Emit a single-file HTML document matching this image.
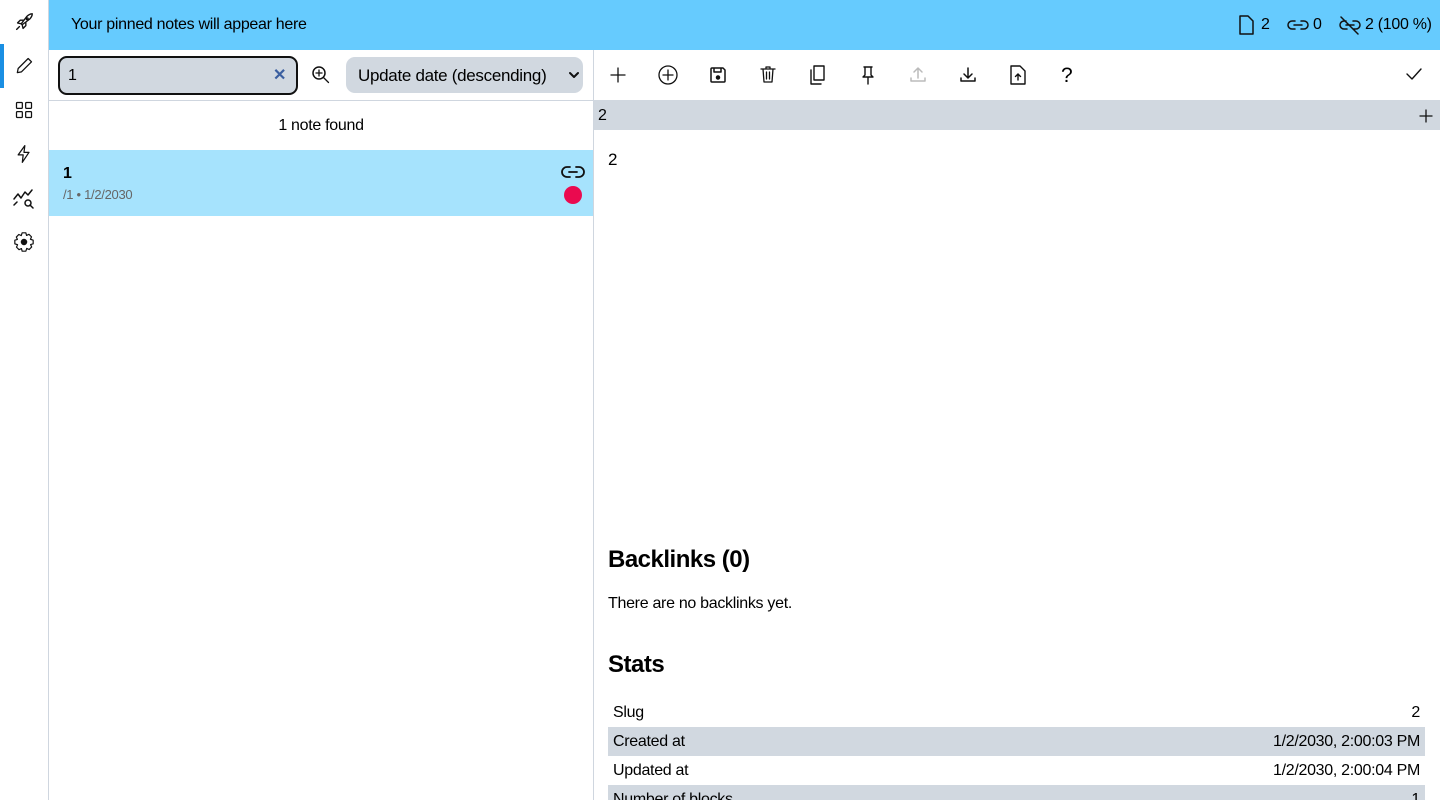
<!DOCTYPE html>
<html style="overflow:hidden;width:1440px;height:800px"><head><meta charset="utf-8"><style>
*{box-sizing:border-box;margin:0;padding:0}
body{width:1440px;height:800px;overflow:hidden;background:#fff;font-family:"Liberation Sans",sans-serif;color:#000;font-size:16px;position:relative;letter-spacing:-0.3px}
.abs{position:absolute}
svg{display:block}
.ic{fill:none;stroke:#111;stroke-width:1.5;stroke-linecap:round;stroke-linejoin:round}
</style></head><body>
<!-- sidebar -->
<div class="abs" style="left:0;top:0;width:49px;height:800px;border-right:1px solid #cfd6df"></div>
<div class="abs" style="left:0;top:44px;width:4px;height:44px;background:#1a8fe3"></div>
<svg class="abs ic" style="left:13px;top:11px" width="22" height="22" viewBox="0 0 24 24"><path d="M9 14l6-8c2-2 4-3 6-3 0 2-1 4-3 6l-8 6zM9 14l-4-1 3-3h4M10 15l1 4 3-3v-4M4 20l3-3"/><circle cx="15.5" cy="8.5" r="1"/></svg>
<svg class="abs ic" style="left:14px;top:56px" width="20" height="20" viewBox="0 0 24 24"><path d="M4 20l1-5L17 3l4 4L9 19z"/></svg>
<svg class="abs ic" style="left:14px;top:100px" width="20" height="20" viewBox="0 0 24 24"><rect x="3" y="3" width="7" height="7" rx="1"/><rect x="14" y="3" width="7" height="7" rx="1"/><rect x="3" y="14" width="7" height="7" rx="1"/><rect x="14" y="14" width="7" height="7" rx="1"/></svg>
<svg class="abs ic" style="left:14px;top:144px" width="20" height="20" viewBox="0 0 24 24"><path d="M13 2L5 13h6l-1 9 8-12h-6z"/></svg>
<svg class="abs ic" style="left:12px;top:187px" width="24" height="22" viewBox="0 0 24 22"><path d="M2 12l4-5 3 4 4-6 3 3 4-5"/><circle cx="16" cy="16" r="3"/><path d="M18 18l3 3M2 18l3-3"/></svg>
<svg class="abs ic" style="left:13px;top:231px" width="22" height="22" viewBox="0 0 24 24"><path d="M10 2h4l.8 2.8 2.6-1.2 2.8 2.8-1.2 2.6L22 10v4l-2.8.8 1.2 2.6-2.8 2.8-2.6-1.2L14 22h-4l-.8-2.8-2.6 1.2-2.8-2.8 1.2-2.6L2 14v-4l2.8-.8-1.2-2.6 2.8-2.8 2.6 1.2z" stroke-width="1.3"/><circle cx="12" cy="12" r="2.8" fill="#111"/></svg>
<!-- top bar -->
<div class="abs" style="left:49px;top:0;width:1391px;height:50px;background:#66cbfe"></div>
<div class="abs" style="left:71px;top:16px;font-size:16px">Your pinned notes will appear here</div>
<svg class="abs ic" style="left:1237px;top:15px" width="18" height="20" viewBox="0 0 18 20"><path d="M3 1h8l5 5v13H3z"/></svg>
<div class="abs" style="left:1261px;top:16px">2</div>
<svg class="abs ic" style="left:1287px;top:18px" width="22" height="14" viewBox="0 0 22 14"><path d="M8 3H5a4 4 0 000 8h3M14 3h3a4 4 0 010 8h-3M7 7h8"/></svg>
<div class="abs" style="left:1313px;top:16px">0</div>
<svg class="abs ic" style="left:1338px;top:15px" width="24" height="20" viewBox="0 0 24 20"><path d="M8 6H6a4 4 0 000 8h3M15 6h3a4 4 0 010 8h-3M8 10h8M3 2l17 17"/></svg>
<div class="abs" style="left:1365px;top:16px">2 (100 %)</div>
<!-- left panel -->
<div class="abs" style="left:593px;top:50px;width:1px;height:750px;background:#cfd6df"></div>
<div class="abs" style="left:58px;top:56px;width:240px;height:39px;background:#d1d8e0;border:2px solid #111;border-radius:9px;padding:9px 8px;font-size:16px">1</div>
<div class="abs" style="left:273px;top:65px;color:#3b5fa0;font-weight:bold;font-size:16px">✕</div>
<svg class="abs ic" style="left:311px;top:65px" width="20" height="20" viewBox="0 0 20 20"><circle cx="8" cy="8" r="6"/><path d="M12.5 12.5l5 5M8 5v6M5 8h6" stroke-width="1.3"/></svg>
<div class="abs" style="left:346px;top:57px;width:237px;height:36px;background:#d1d8e0;border-radius:9px;padding:9px 12px;font-size:17px">Update date (descending)</div>
<svg class="abs ic" style="left:569px;top:71px" width="10" height="8" viewBox="0 0 10 8"><path d="M1 2l4 4 4-4" stroke-width="2"/></svg>
<div class="abs" style="left:49px;top:100px;width:544px;height:1px;background:#cfd6df"></div>
<div class="abs" style="left:49px;top:117px;width:544px;text-align:center">1 note found</div>
<div class="abs" style="left:49px;top:150px;width:544px;height:66px;background:#a6e3fd"></div>
<div class="abs" style="left:63px;top:165px;font-weight:bold;font-size:16px">1</div>
<div class="abs" style="left:63px;top:187px;font-size:13px;color:#666">/1 • 1/2/2030</div>
<svg class="abs ic" style="left:561px;top:165px" width="24" height="14" viewBox="0 0 24 14"><path d="M9 2H6a5 5 0 000 10h3M15 2h3a5 5 0 010 10h-3M8 7h8" stroke-width="1.8"/></svg>
<div class="abs" style="left:564px;top:186px;width:18px;height:18px;border-radius:50%;background:#ea0a4f"></div>
<!-- toolbar -->
<svg class="abs ic" style="left:608px;top:65px" width="20" height="20" viewBox="0 0 20 20"><path d="M10 3v14M3 10h14" stroke-width="1.3"/></svg>
<svg class="abs ic" style="left:657px;top:64px" width="22" height="22" viewBox="0 0 22 22"><circle cx="11" cy="11" r="9" stroke-width="1.3"/><path d="M11 6v10M6 11h10" stroke-width="1.3"/></svg>
<svg class="abs ic" style="left:708px;top:65px" width="20" height="20" viewBox="0 0 20 20"><path d="M3 4a1 1 0 011-1h11l2 2v11a1 1 0 01-1 1H4a1 1 0 01-1-1zM6 3v4h7V3"/><circle cx="10" cy="12.5" r="1.5" fill="#111"/></svg>
<svg class="abs ic" style="left:758px;top:65px" width="20" height="20" viewBox="0 0 20 20"><path d="M3 4h14M5 4l1 13h8l1-13M8 3V2h4v1M8.5 7v7M11.5 7v7" stroke-width="1.3"/></svg>
<svg class="abs ic" style="left:808px;top:64px" width="20" height="22" viewBox="0 0 20 22"><path d="M6 2h10v14H6zM3 6v14h10" stroke-width="1.4"/></svg>
<svg class="abs ic" style="left:858px;top:64px" width="20" height="22" viewBox="0 0 20 22"><path d="M6 3h8M7 3v8l-2 2h10l-2-2V3M10 13v7" stroke-width="1.4"/></svg>
<svg class="abs ic" style="left:908px;top:65px;stroke:#bbb" width="20" height="20" viewBox="0 0 20 20"><path d="M10 3v10M6 7l4-4 4 4M3 13v3h14v-3"/></svg>
<svg class="abs ic" style="left:958px;top:65px" width="20" height="20" viewBox="0 0 20 20"><path d="M10 3v10M6 9l4 4 4-4M3 13v3h14v-3"/></svg>
<svg class="abs ic" style="left:1008px;top:64px" width="20" height="22" viewBox="0 0 20 22"><path d="M3 2h9l5 5v13H3zM10 16v-6M7.5 12.5L10 10l2.5 2.5" stroke-width="1.4"/></svg>
<div class="abs" style="left:1061px;top:64px;font-size:21px">?</div>
<svg class="abs ic" style="left:1405px;top:66px" width="18" height="16" viewBox="0 0 18 16"><path d="M2 8l5 5L16 3" stroke-width="1.4"/></svg>
<!-- title bar -->
<div class="abs" style="left:594px;top:100px;width:846px;height:30px;background:#d1d8e0"></div>
<div class="abs" style="left:598px;top:107px">2</div>
<svg class="abs ic" style="left:1419px;top:109px" width="14" height="14" viewBox="0 0 14 14"><path d="M7 1v12M1 7h12" stroke-width="1.3"/></svg>
<div class="abs" style="left:608px;top:150px;font-size:17px">2</div>
<div class="abs" style="left:608px;top:546px;font-size:24px;font-weight:bold;letter-spacing:-0.5px">Backlinks (0)</div>
<div class="abs" style="left:608px;top:595px;font-size:16px">There are no backlinks yet.</div>
<div class="abs" style="left:608px;top:651px;font-size:24px;font-weight:bold;letter-spacing:-0.5px">Stats</div>
<div class="abs" style="left:608px;top:698px;width:817px;height:29px;padding:6px 5px"><span>Slug</span><span style="float:right">2</span></div>
<div class="abs" style="left:608px;top:727px;width:817px;height:29px;padding:6px 5px;background:#d1d8e0"><span>Created at</span><span style="float:right">1/2/2030, 2:00:03 PM</span></div>
<div class="abs" style="left:608px;top:756px;width:817px;height:29px;padding:6px 5px"><span>Updated at</span><span style="float:right">1/2/2030, 2:00:04 PM</span></div>
<div class="abs" style="left:608px;top:785px;width:817px;height:15px;overflow:hidden;background:#d1d8e0"><div style="padding:6px 5px"><span>Number of blocks</span><span style="float:right">1</span></div></div>
</body></html>
